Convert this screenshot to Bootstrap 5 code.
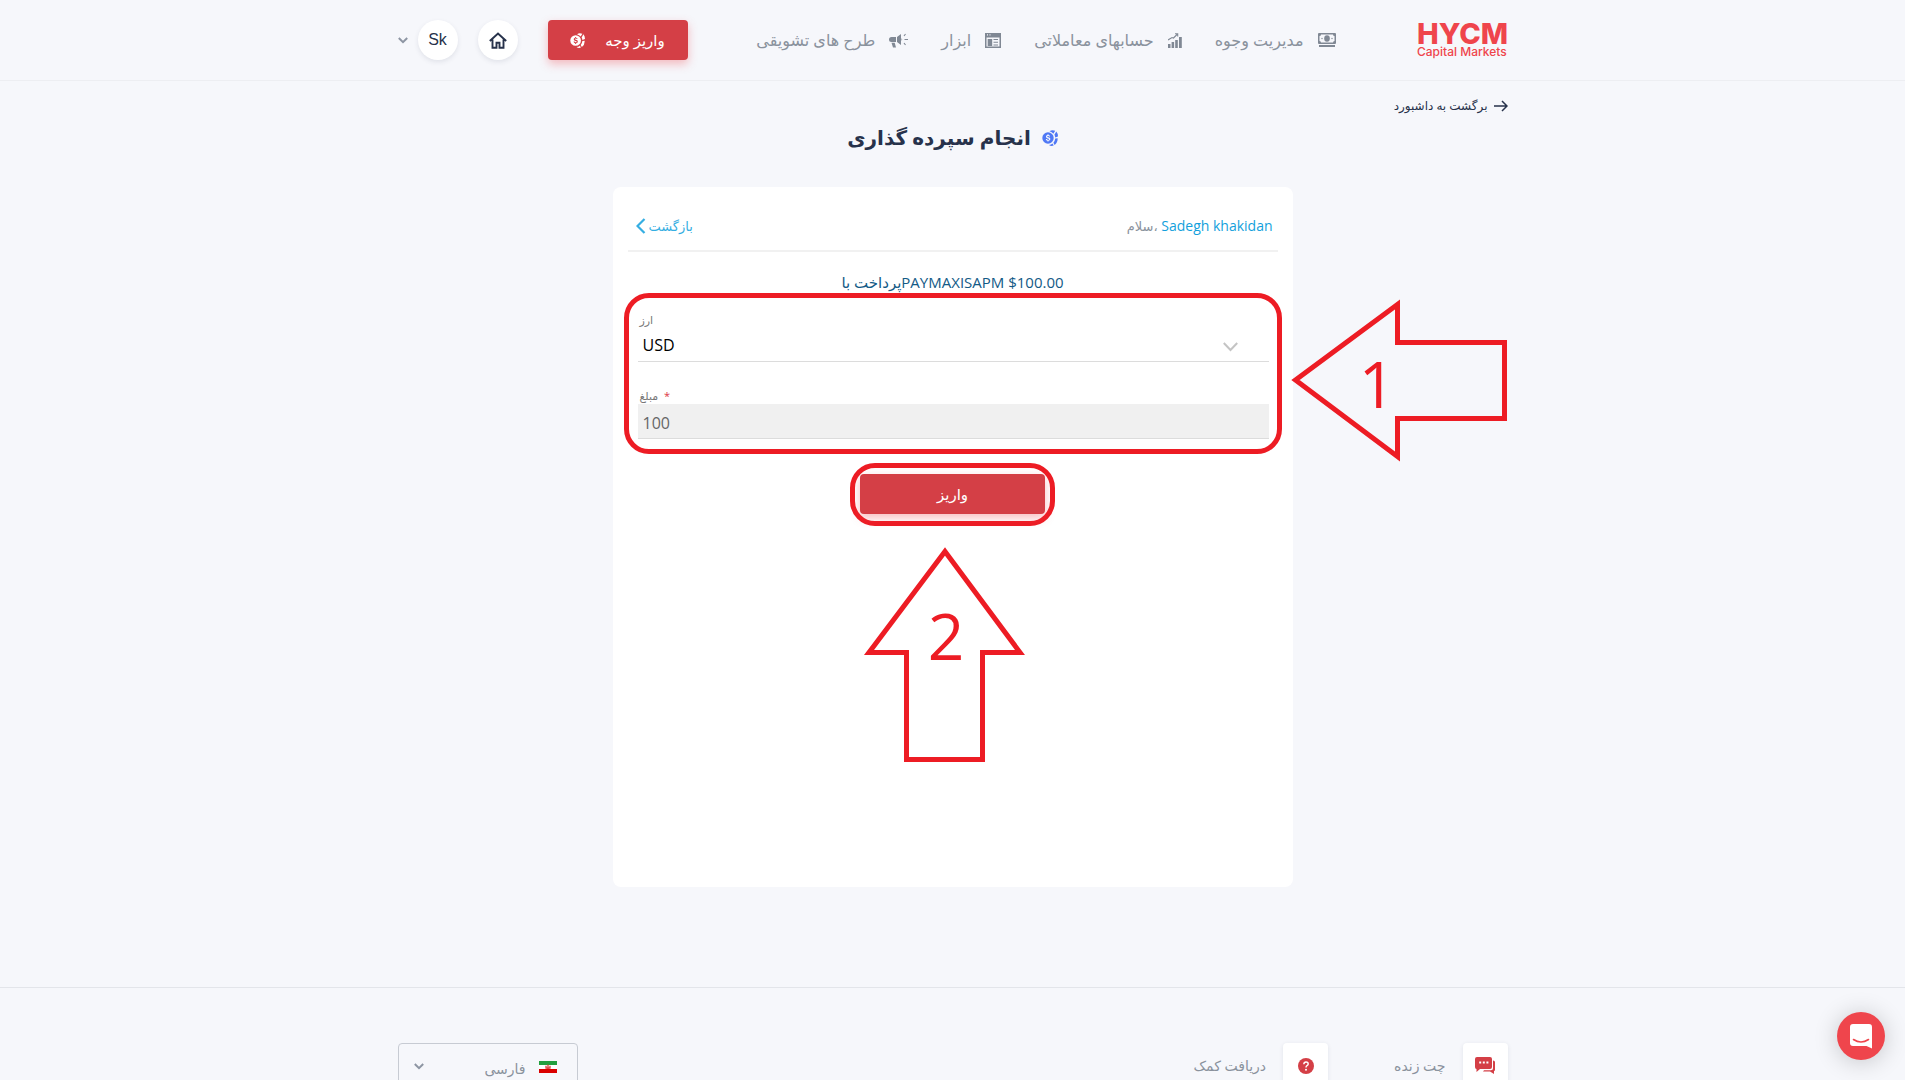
<!DOCTYPE html>
<html lang="fa" dir="rtl">
<head>
<meta charset="utf-8">
<meta name="viewport" content="width=device-width, initial-scale=1">
<title>HYCM</title>
<link rel="stylesheet" href="https://cdn.jsdelivr.net/npm/bootstrap@5.3.0/dist/css/bootstrap.min.css">
<style>
  body { background: #f6f7fb; color: #8a929d; font-family: "Open Sans", "DejaVu Sans", sans-serif; font-size: 14px; line-height: 20px; }
  a { color: inherit; text-decoration: none; }
  svg { display: block; flex: none; }
  .wrap { width: 100%; max-width: 1110px; margin: 0 auto; }
  .topbar { height: 81px; border-bottom: 1px solid #edeef2; }
  .brand { width: 91px; color: #ef454c; }
  .brand svg { overflow: visible; }
  .mainnav { gap: 33px; margin-inline-start: 81px; font-size: 16px; }
  .mainnav a { gap: 14px; }
  .tools { margin-inline-start: auto; }
  .home-link { margin-inline: 30px 20px; }
  .account { gap: 10px; }
  .btn-deposit, .btn-deposit:hover { background: #d43f46; color: #fff; border: 0; border-radius: 4px; height: 40px; box-shadow: 0 4px 10px rgba(239, 69, 76, .35); font-size: 15px; }
  .btn-fund { width: 140px; gap: 20px; }
  .round { width: 40px; height: 40px; border: 0; border-radius: 50%; background: #fff; color: #27324b; box-shadow: 0 2px 5px rgba(40, 50, 80, .1); font-family: "Liberation Sans", sans-serif; font-size: 16px; }
  .back-dash { color: #27324b; font-size: 12px; gap: 6px; padding-top: 15px; }
  .page-title { color: #27324b; font-size: 20px; line-height: 32px; font-weight: 700; gap: 11px; margin: 5px 0 33px; }
  .panel { width: 680px; max-width: 100%; min-height: 700px; margin: 0 auto; padding: 25px 11px; background: #fff; border-radius: 8px; position: relative; }
  .hello { border-bottom: 2px solid #f1f1f1; margin: 0 4px; padding: 5px 5px 15px 8px; height: 40px; }
  .hello a { color: #129fdc; }
  .hello .back { color: #35aee2; gap: 3px; font-size: 13px; }
  .hello bdi { font-size: 13px; }
  .summary { color: #135a86; text-align: center; font-size: 15px; margin: 20px 0 1px; }
  .marked { border: 5px solid #ed1c24; border-radius: 25px; }
  .fields { height: 161px; padding: 14px 8px 0 9px; }
  .fields label { display: block; font-size: 11px; line-height: 16px; padding-left: 2px; color: #777; }
  .fields .form-control, .fields .form-select { border: 0; border-bottom: 1px solid #dcdcdc; border-radius: 0; height: 34px; padding: 1px 5px 0; font-size: 16px; color: #000; background: none; }
  .fields .form-control { height: 35px; background: #f0f0f0; color: #666; padding-top: 3px; }
  .pick { position: relative; margin-bottom: 26px; }
  .pick svg { position: absolute; right: 31px; top: 14px; }
  .submit-mark { width: 205px; height: 63px; margin: 9px auto 0; padding: 6px 5px; }
  .callout { position: absolute; overflow: visible; }
  .callout path { fill: none; stroke: #ed1c24; stroke-width: 5; }
  .callout text { fill: #ed1c24; font: 64px "Open Sans", sans-serif; text-anchor: middle; }
  .to-fields { left: 100%; top: 112px; }
  .to-submit { left: 252px; top: 360px; }
  .foot { margin-top: 100px; padding: 55px 0; border-top: 1px solid #e3e5ea; }
  .tile { width: 45px; height: 45px; background: #fff; border-radius: 4px; box-shadow: 0 1px 4px rgba(40, 50, 80, .1); }
  .foot-links { gap: 66px; }
  .help { gap: 17px; }
  .lang { width: 180px; position: relative; }
  .lang .form-select { height: 50px; border: 1px solid #c7cbd3; border-radius: 4px; background: none; color: #8a929d; font-size: 14px; padding: 0 51px 0 30px; }
  .lang .flag { position: absolute; right: 21px; top: 18px; }
  .lang .arrow { position: absolute; left: 16px; top: 20px; }
  .chat { position: fixed; right: 20px; bottom: 20px; width: 48px; height: 48px; border: 0; border-radius: 50%; background: #ef454c; box-shadow: 0 2px 24px rgba(0, 0, 0, .2); }
</style>
<script src="https://cdn.jsdelivr.net/npm/bootstrap@5.3.0/dist/js/bootstrap.bundle.min.js"></script>
</head>
<body class="vh-100 overflow-hidden">
<svg width="0" height="0" class="position-absolute" aria-hidden="true">
  <symbol id="coins" viewBox="0 0 16 16">
    <path fill="currentColor" d="M7.500 1.200Q10-.6 13.200.7L11.400 3.800A7 7 0 0 0 7.500 1.200ZM14.300 1.400A7 7 0 0 1 15.900 6.500L13.200 7.500Q13.200 5.700 12.400 4.700ZM13.200 8.600 15.600 8.200Q16 12.500 12.600 15L11.400 12.800Q13 11 13.200 8.600ZM10.500 13.500 11.700 15.500Q9 16.500 7 15Q9.200 14.700 10.500 13.500Z"/>
    <path fill="currentColor" fill-rule="evenodd" d="M6 2.300a5.700 5.700 0 1 0 0 11.400A5.700 5.700 0 0 0 6 2.300ZM5.500 4.300h1V5c.9.100 1.500.6 1.600 1.400H7c-.1-.4-.5-.5-1-.5s-.9.200-.9.600c0 .3.300.5 1.100.7 1.300.2 2.100.7 2.100 1.800 0 1-.7 1.600-1.800 1.800v.8h-1v-.8C4.400 10.600 3.800 10 3.800 9.100h1.100c.1.500.5.800 1.200.8.600 0 1-.2 1-.7 0-.4-.300-.6-1.200-.8C4.600 8.200 4 7.600 4 6.700 4 5.800 4.600 5.200 5.500 5Z"/>
  </symbol>
</svg>
<header class="topbar">
  <div class="wrap h-100 d-flex align-items-center">
    <a class="brand" href="#" aria-label="HYCM Capital Markets">
      <svg width="91" height="38" viewBox="0 0 91 38" direction="ltr" fill="#ef454c">
        <text y="23" font-family="Inter, sans-serif" font-weight="800" font-size="29">HYCM</text>
        <text y="35" font-family="Inter, sans-serif" font-weight="500" font-size="12">Capital Markets</text>
      </svg>
    </a>
    <nav class="mainnav d-flex align-items-center">
      <a href="#" class="d-flex align-items-center">
        <svg width="18" height="15" viewBox="0 0 18 15" fill="#808894"><path fill-rule="evenodd" d="M1 0h16q1 0 1 1v9q0 1-1 1H1q-1 0-1-1V1q0-1 1-1Zm2 1.500A1.500 1.500 0 0 1 1.500 3v5A1.500 1.500 0 0 1 3 9.500h12A1.500 1.500 0 0 1 16.500 8V3A1.500 1.500 0 0 1 15 1.500Z"/><ellipse cx="9" cy="5.500" rx="2.800" ry="3.300"/><circle cx="4" cy="5.500" r=".7"/><circle cx="14" cy="5.500" r=".7"/><path d="M1 12h16v2H1z"/></svg>
        <span>مدیریت وجوه</span></a>
      <a href="#" class="d-flex align-items-center">
        <svg width="14" height="15" viewBox="0 0 14 15" fill="#808894"><path d="M0 11h2.500v4H0zM3.600 9h2.500v6H3.600zM7.200 7h2.600v8H7.200zM11 4h2.800v11H11z"/><path d="m0 7 4-2.500 1.500.5L9 1.500M7 .8h2.700v2.600" fill="none" stroke="#808894" stroke-width="1.100"/></svg>
        <span>حسابهای معاملاتی</span></a>
      <a href="#" class="d-flex align-items-center">
        <svg width="16" height="15" viewBox="0 0 16 15" fill="#808894"><path fill-rule="evenodd" d="M0 0h16v15H0zM1.500 4.500v9h13v-9ZM2 1.200v1.200h1V1.200Zm2.500 0v1.200h1V1.200Z"/><path d="M2.700 6h4.500v7H2.700zM8.500 6H13v1H8.500zM8.500 8.800H13v1H8.500zM8.500 11.500H13v1H8.500z"/></svg>
        <span>ابزار</span></a>
      <a href="#" class="d-flex align-items-center">
        <svg width="19" height="15" viewBox="0 0 19 15" fill="#808894"><path d="M12 1v11L8 9V4ZM7 4v5H2.500a2.500 2.500 0 0 1 0-5ZM2.500 9.800h3.200l1.300 4.700H4ZM12.500 5q1.500 1.500 0 3Z"/><path d="m15 3 1.500-2M15.500 6.500H19M15 10l1.500 2" stroke="#808894" stroke-width="1.100"/></svg>
        <span>طرح های تشویقی</span></a>
    </nav>
    <div class="tools d-flex align-items-center">
      <button type="button" class="btn btn-deposit btn-fund d-flex align-items-center justify-content-center p-0"><span>واریز وجه</span><svg width="15" height="15"><use href="#coins"/></svg></button>
      <a href="#" class="round home-link d-flex align-items-center justify-content-center" aria-label="خانه">
        <svg width="18" height="17" viewBox="0 0 18 17" fill="none" stroke="#27324b" stroke-width="1.900"><path d="M.8 9 9 1.600 17.200 9M3.500 7.500v8.300h4v-5h3v5h4V7.500"/></svg></a>
      <button type="button" class="btn account p-0 d-flex align-items-center border-0" aria-label="Sk"><span class="round d-flex align-items-center justify-content-center">Sk</span>
        <svg width="10" height="7" viewBox="0 0 10 7" fill="none" stroke="#8d95a3" stroke-width="2"><path d="m.8 1 4.200 4.200L9.200 1"/></svg></button>
    </div>
  </div>
</header>
<main>
  <div class="wrap">
    <a href="#" class="back-dash d-inline-flex align-items-center">
      <svg width="14" height="12" viewBox="0 0 14 12" fill="none" stroke="#27324b" stroke-width="1.500"><path d="M0 6h13M8 1l5 5-5 5"/></svg><span>برگشت به داشبورد</span></a>
    <h1 class="page-title d-flex align-items-center justify-content-center"><svg width="16" height="16" color="#4f78f5"><use href="#coins"/></svg><span>انجام سپرده گذاری</span></h1>
  </div>
  <section class="panel">
    <div class="hello d-flex justify-content-between align-items-center" dir="ltr">
      <a href="#" class="back d-flex align-items-center"><svg width="10" height="16" viewBox="0 0 10 16" fill="none" stroke="#35aee2" stroke-width="2.200"><path d="M8.500 1 1.500 8l7 7"/></svg><span>بازگشت</span></a>
      <div><bdi dir="rtl">،سلام</bdi> <a href="#">Sadegh khakidan</a></div>
    </div>
    <p class="summary" dir="ltr"><bdi>پرداخت با</bdi><bdi>PAYMAXISAPM $100.00</bdi></p>
    <form dir="ltr">
      <div class="marked fields">
        <label for="cur">ارز</label>
        <div class="pick">
          <select id="cur" class="form-select"><option>USD</option></select>
          <svg width="15" height="10" viewBox="0 0 15 10" fill="none" stroke="#c4c4c4" stroke-width="2"><path d="m.8 1 6.700 7 6.700-7"/></svg>
        </div>
        <label for="amt"><bdi>مبلغ</bdi>&nbsp; <span class="text-danger">*</span></label>
        <input id="amt" class="form-control" value="100" readonly>
      </div>
      <div class="marked submit-mark"><button type="button" class="btn btn-deposit w-100 p-0">واریز</button></div>
    </form>
    <svg class="callout to-fields" width="215" height="162" viewBox="0 0 215 162" direction="ltr"><path d="M2.500 81 104.500 5.500v38h107v76h-107v38Z"/><text x="84" y="109">1</text></svg>
    <svg class="callout to-submit" width="160" height="215" viewBox="0 0 160 215" direction="ltr"><path d="M80 4.500 155 105.500h-37.500v107h-76v-107H4Z"/><text x="81" y="113">2</text></svg>
  </section>
</main>
<footer class="foot">
  <div class="wrap d-flex align-items-start justify-content-between">
    <div class="foot-links d-flex">
    <a href="#" class="help d-flex align-items-center"><span class="tile d-flex align-items-center justify-content-center">
      <svg width="20" height="17" viewBox="0 0 20 17" fill="#d43f46"><path fill-rule="evenodd" d="M2 0h13q2 0 2 2v8q0 2-2 2H5l-3.500 3V12Q0 12 0 10V2Q0 0 2 0Zm2.200 4.500v2h2v-2Zm3.600 0v2h2v-2Zm3.600 0v2h2v-2Z"/><path d="M18 3.500q2 0 2 1.500v8q0 1-1 1v3l-4-2.500H8L9 13.200h7q2 0 2-2Z"/></svg></span><span>چت زنده</span></a>
    <a href="#" class="help d-flex align-items-center"><span class="tile d-flex align-items-center justify-content-center">
      <svg width="16" height="16" viewBox="0 0 16 16"><circle cx="8" cy="8" r="8" fill="#d43f46"/><path d="M5.800 6.200Q6 4 8 4q2.200 0 2.200 2 0 1-1.200 1.700Q8 8.300 8 9.500" fill="none" stroke="#fff" stroke-width="1.400"/><circle cx="8" cy="11.800" r="1" fill="#fff"/></svg></span><span>دریافت کمک</span></a>
    </div>
    <div class="lang">
      <select class="form-select" aria-label="زبان"><option>فارسی</option></select>
      <svg class="flag" width="18" height="12" viewBox="0 0 18 12"><path fill="#fff" d="M0 0h18v12H0z"/><path fill="#239f40" d="M0 0h18v4H0z"/><path fill="#da0000" d="M0 8h18v4H0z"/><path d="M7 4.800v2.400h4V4.800M9 3.500V8" fill="none" stroke="#da3030" stroke-width="1.200"/></svg>
      <svg class="arrow" width="10" height="7" viewBox="0 0 10 7" fill="none" stroke="#8d95a3" stroke-width="2"><path d="m.8 1 4.200 4.200L9.200 1"/></svg>
    </div>
  </div>
</footer>
<button type="button" class="chat p-0 d-flex align-items-center justify-content-center" aria-label="گفتگو">
  <svg width="22" height="25" viewBox="0 0 22 25"><path fill="#fff" d="M3 0h16q3 0 3 3v21.500L16.500 22H3q-3 0-3-3V3q0-3 3-3Z"/><path d="M3.500 15.500q7.500 5 15 0" fill="none" stroke="#ef454c" stroke-width="1.600" stroke-linecap="round"/></svg></button>
</body>
</html>
